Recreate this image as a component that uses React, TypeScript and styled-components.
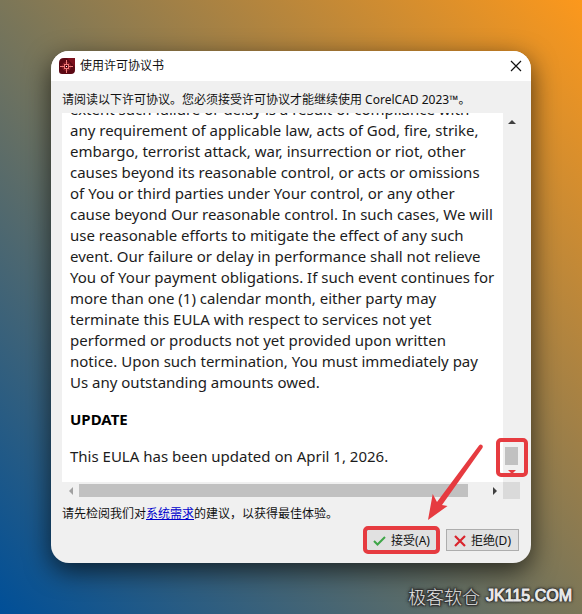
import React from "react";
import styled, { createGlobalStyle } from "styled-components";

const GlobalStyle = createGlobalStyle`
  *, *::before, *::after { box-sizing: border-box; }
  body {
    margin: 0;
    font-family: "Noto Sans", "Noto Sans CJK SC", sans-serif;
    font-size: 12px;
    line-height: 18px;
    color: #111;
  }
  p, h1, h2 { margin: 0; }
  button { font: inherit; color: inherit; padding: 0; }
`;

const red = "#e63b40";

const Desktop = styled.main`
  position: relative;
  display: flex;
  height: 100vh;
  padding: 51px;
  background: linear-gradient(to top right, #004f98 0%, #7b7658 50%, #fc981c 100%);
`;

const Dialog = styled.section`
  flex: 1;
  min-width: 0;
  display: flex;
  flex-direction: column;
  border-radius: 18px;
  background: #f0f0f0;
  box-shadow: 0 8px 26px rgba(0, 0, 0, 0.65);
`;

const TitleBar = styled.header`
  display: flex;
  align-items: center;
  gap: 5px;
  height: 30px;
  padding: 0 8px;
  border-radius: 18px 18px 0 0;
  background: #fff;
`;

const Title = styled.h1`
  flex: 1;
  font-size: 12px;
  font-weight: 400;
`;

const CloseButton = styled.button`
  display: flex;
  align-items: center;
  justify-content: center;
  width: 14px;
  height: 14px;
  border: 0;
  background: none;
`;

const Body = styled.div`
  flex: 1;
  min-height: 0;
  display: flex;
  flex-direction: column;
  padding: 10px 11px 12px;
`;

const Notice = styled.p`
  height: 22px;
  white-space: nowrap;
`;

const Viewer = styled.div`
  flex: 1;
  min-height: 0;
  display: grid;
  grid-template-columns: minmax(0, 1fr) 17px;
  grid-template-rows: minmax(0, 1fr) 17px;
`;

const Agreement = styled.article`
  display: flex;
  flex-direction: column;
  justify-content: flex-end;
  gap: 16px;
  overflow: hidden;
  padding: 0 8px 15px;
  background: #fff;
  color: #1c1c1c;
  font-size: 15px;
  line-height: 21px;
  white-space: pre;
`;

const Heading = styled.h2`
  color: #000;
  font-size: 15px;
  font-weight: 700;
`;

const Scrollbar = styled.div<{ $vertical?: boolean }>`
  position: relative;
  display: flex;
  flex-direction: ${(p) => (p.$vertical ? "column" : "row")};
  justify-content: space-between;
  align-items: center;
  background: #f0f0f0;
`;

const ArrowButton = styled.button<{ $tone?: string }>`
  display: flex;
  align-items: center;
  justify-content: center;
  width: 17px;
  height: 17px;
  border: 0;
  background: none;
  color: ${(p) => p.$tone ?? "#404040"};
`;

const VerticalThumb = styled.div`
  width: 13px;
  height: 18px;
  margin-top: auto;
  background: #c1c1c1;
`;

const HorizontalThumb = styled.div`
  flex: 0 1 389px;
  height: 13px;
  margin-right: auto;
  background: #c1c1c1;
`;

const Corner = styled.div`
  background: #dadada;
`;

const ThumbHighlight = styled.div`
  position: absolute;
  right: -8px;
  bottom: 5px;
  width: 32px;
  height: 39px;
  border: 4px solid ${red};
  border-radius: 5px;
`;

const Advice = styled.p`
  padding-top: 6px;
  white-space: nowrap;
`;

const Link = styled.a`
  color: #00c;
  text-decoration: underline;
`;

const Actions = styled.footer`
  display: flex;
  justify-content: flex-end;
  gap: 9px;
  padding: 6px 1px 0 0;
`;

const Marked = styled.div`
  position: relative;
`;

const ActionButton = styled.button<{ $marked?: boolean }>`
  display: flex;
  align-items: center;
  justify-content: center;
  gap: 5px;
  width: ${(p) => (p.$marked ? "71px" : "73px")};
  height: 22px;
  border: 1px solid ${(p) => (p.$marked ? "#2878b8" : "#adadad")};
  background: #e1e1e1;
  outline: ${(p) => (p.$marked ? `4px solid ${red}` : "none")};
  outline-offset: -1px;
  border-radius: ${(p) => (p.$marked ? "2px" : "0")};
  padding-top: 1px;
  white-space: nowrap;
`;

const Pointer = styled.svg`
  position: absolute;
  left: 54px;
  bottom: 29px;
  pointer-events: none;
`;

const Watermark = styled.div`
  position: absolute;
  right: 10px;
  bottom: 6px;
  display: flex;
  align-items: center;
  gap: 6px;
  color: #e6e6e6;
  line-height: 24px;
  text-shadow: 1px 1px 1px #333, -1px -1px 1px #333, 1px -1px 1px #333,
    -1px 1px 1px #333, 0 0 3px #333, 0 0 3px #333, 0 0 4px #333;
`;

const WatermarkName = styled.span`
  font-family: "Noto Sans CJK SC", sans-serif;
  font-size: 18px;
  font-weight: 300;
`;

const WatermarkSite = styled.span`
  font-family: "Liberation Sans", sans-serif;
  font-size: 16px;
  font-weight: 400;
  color: #fff;
  -webkit-text-stroke: 1px #e6e6e6;
`;

const clause = [
  "extent such failure or delay is a result of compliance with",
  "any requirement of applicable law, acts of God, fire, strike,",
  "embargo, terrorist attack, war, insurrection or riot, other",
  "causes beyond its reasonable control, or acts or omissions",
  "of You or third parties under Your control, or any other",
  "cause beyond Our reasonable control. In such cases, We will",
  "use reasonable efforts to mitigate the effect of any such",
  "event. Our failure or delay in performance shall not relieve",
  "You of Your payment obligations. If such event continues for",
  "more than one (1) calendar month, either party may",
  "terminate this EULA with respect to services not yet",
  "performed or products not yet provided upon written",
  "notice. Upon such termination, You must immediately pay",
  "Us any outstanding amounts owed.",
].join("\n");

function AppIcon() {
  return (
    <svg width="16" height="16" viewBox="0 0 16 16" aria-hidden="true">
      <path d="M5 0H16V12Q16 16 12 16H3Q0 16 0 13V5Q0 0 5 0Z" fill="#5c0914" />
      <path d="M8 0H16V9Z" fill="#7c101d" />
      <g fill="none" stroke="#f07a78">
        <circle cx="7.5" cy="8.5" r="4" stroke="#93242e" />
        <rect x="5.5" y="6.5" width="4" height="4" />
        <path d="M7.5 2V6M7.5 11V15M1 8.5H5M10 8.5H14" />
      </g>
      <rect x="7" y="8" width="1" height="1" fill="#fff" />
    </svg>
  );
}

function Triangle({ points }: { points: string }) {
  return (
    <svg width="8" height="8" viewBox="0 0 8 8" aria-hidden="true">
      <polygon points={points} fill="currentColor" />
    </svg>
  );
}

export default function App() {
  return (
    <>
      <GlobalStyle />
      <Desktop>
        <Dialog role="dialog" aria-labelledby="dialog-title">
          <TitleBar>
            <AppIcon />
            <Title id="dialog-title">使用许可协议书</Title>
            <CloseButton aria-label="关闭">
              <svg width="12" height="12" viewBox="0 0 12 12" aria-hidden="true">
                <path d="M1 1L11 11M11 1L1 11" stroke="#111" strokeWidth="1.2" />
              </svg>
            </CloseButton>
          </TitleBar>
          <Body>
            <Notice>请阅读以下许可协议。您必须接受许可协议才能继续使用 CorelCAD 2023™。</Notice>
            <Viewer>
              <Agreement>
                <p>{clause}</p>
                <Heading>UPDATE</Heading>
                <p>This EULA has been updated on April 1, 2026.</p>
              </Agreement>
              <Scrollbar $vertical>
                <ArrowButton aria-label="向上滚动">
                  <Triangle points="0,6 4,2 8,6" />
                </ArrowButton>
                <VerticalThumb />
                <ArrowButton $tone={red} aria-label="向下滚动">
                  <Triangle points="0,0 4,4 8,0" />
                </ArrowButton>
                <ThumbHighlight />
              </Scrollbar>
              <Scrollbar>
                <ArrowButton $tone="#a0a0a0" aria-label="向左滚动">
                  <Triangle points="6,0 2,4 6,8" />
                </ArrowButton>
                <HorizontalThumb />
                <ArrowButton aria-label="向右滚动">
                  <Triangle points="2,0 6,4 2,8" />
                </ArrowButton>
              </Scrollbar>
              <Corner />
            </Viewer>
            <Advice>
              请先检阅我们对<Link href="#requirements">系统需求</Link>的建议，以获得最佳体验。
            </Advice>
            <Actions>
              <Marked>
                <ActionButton $marked>
                  <svg width="13" height="12" viewBox="0 0 13 12" aria-hidden="true">
                    <path d="M1 6L4.5 9.5L12 2" fill="none" stroke="#3fa648" strokeWidth="2" />
                  </svg>
                  接受(A)
                </ActionButton>
                <Pointer width="64" height="80" viewBox="0 0 64 80" aria-hidden="true">
                  <path
                    d="M8 78L12.7 52L17 60L59 3.5Q60.5 2 62 3Q63.4 4.200 62.400 6L22 63L27.500 64Z"
                    fill={red}
                  />
                </Pointer>
              </Marked>
              <ActionButton>
                <svg width="12" height="12" viewBox="0 0 12 12" aria-hidden="true">
                  <path d="M1 1L11 11M11 1L1 11" stroke="#d9242c" strokeWidth="2.2" />
                </svg>
                拒绝(D)
              </ActionButton>
            </Actions>
          </Body>
        </Dialog>
        <Watermark>
          <WatermarkName>极客软仓</WatermarkName>
          <WatermarkSite>JK115.COM</WatermarkSite>
        </Watermark>
      </Desktop>
    </>
  );
}
